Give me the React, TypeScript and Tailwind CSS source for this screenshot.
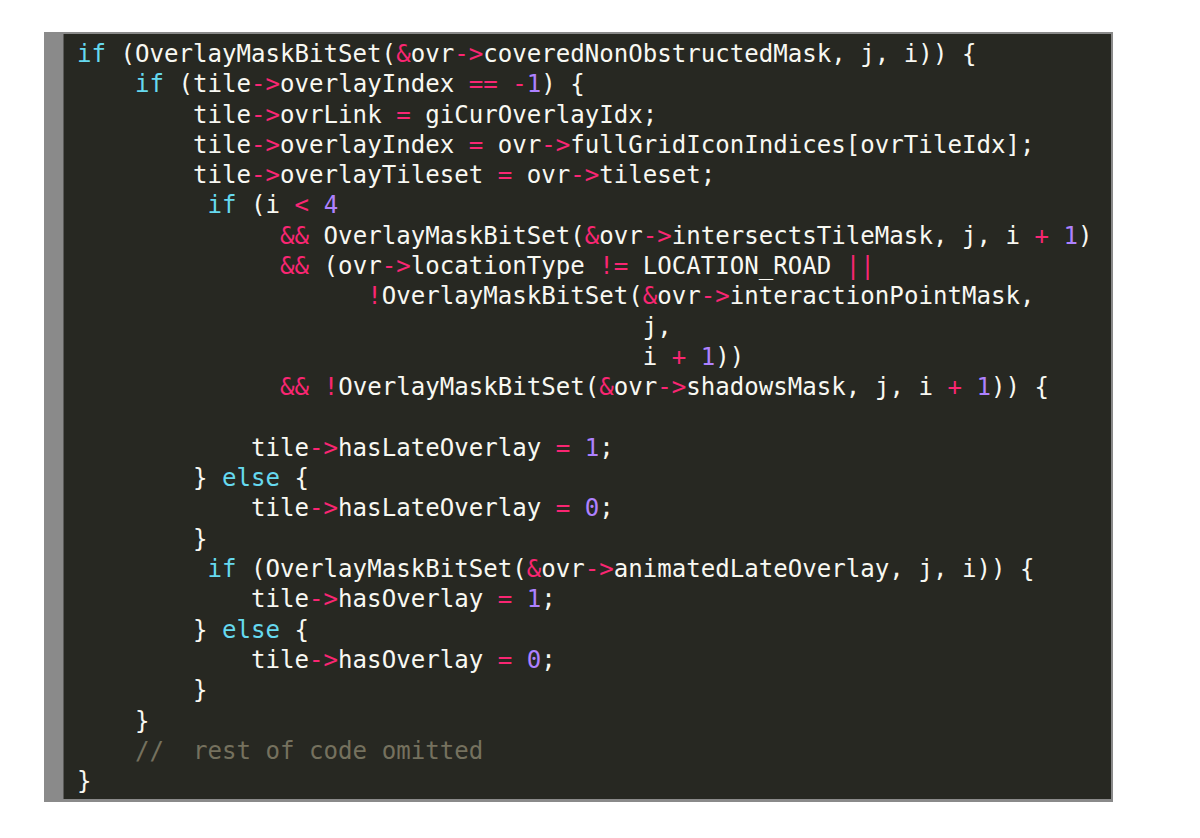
import React from "react";

const lines: string[] = [
  "if (OverlayMaskBitSet(&ovr->coveredNonObstructedMask, j, i)) {",
  "    if (tile->overlayIndex == -1) {",
  "        tile->ovrLink = giCurOverlayIdx;",
  "        tile->overlayIndex = ovr->fullGridIconIndices[ovrTileIdx];",
  "        tile->overlayTileset = ovr->tileset;",
  "         if (i < 4",
  "              && OverlayMaskBitSet(&ovr->intersectsTileMask, j, i + 1)",
  "              && (ovr->locationType != LOCATION_ROAD ||",
  "                    !OverlayMaskBitSet(&ovr->interactionPointMask,",
  "                                       j,",
  "                                       i + 1))",
  "              && !OverlayMaskBitSet(&ovr->shadowsMask, j, i + 1)) {",
  "",
  "            tile->hasLateOverlay = 1;",
  "        } else {",
  "            tile->hasLateOverlay = 0;",
  "        }",
  "         if (OverlayMaskBitSet(&ovr->animatedLateOverlay, j, i)) {",
  "            tile->hasOverlay = 1;",
  "        } else {",
  "            tile->hasOverlay = 0;",
  "        }",
  "    }",
  "    //  rest of code omitted",
  "}",
];

type Tok = { t: string; c: string };

const WHITE = "text-[#f8f8f2]";
const PINK = "text-[#f92672]";
const CYAN = "text-[#66d9ef]";
const PURPLE = "text-[#ae81ff]";
const COMMENT = "text-[#75715e]";

function tokenize(line: string): Tok[] {
  const out: Tok[] = [];
  const ci = line.indexOf("//");
  let code = line;
  let comment = "";
  if (ci >= 0) {
    code = line.slice(0, ci);
    comment = line.slice(ci);
  }
  const re = /(\bif\b|\belse\b)|(\d+)|(->|==|!=|&&|\|\||[=<+!&-])/g;
  let last = 0;
  let m: RegExpExecArray | null;
  while ((m = re.exec(code))) {
    if (m.index > last) out.push({ t: code.slice(last, m.index), c: WHITE });
    if (m[1]) out.push({ t: m[0], c: CYAN });
    else if (m[2]) out.push({ t: m[0], c: PURPLE });
    else out.push({ t: m[0], c: PINK });
    last = m.index + m[0].length;
  }
  if (last < code.length) out.push({ t: code.slice(last), c: WHITE });
  if (comment) out.push({ t: comment, c: COMMENT });
  return out;
}

export default function App() {
  return (
    <div className="min-h-[838px] w-[1200px] bg-white pt-[32px] pl-[44px]">
      <div className="w-[1069px] h-[770px] bg-[#8a8a8a] pl-[19px] pt-[2px] pr-[2px] pb-[3px]">
        <div className="w-full h-full bg-[#272822] border-l border-[#5a5a58] pl-[13px] pt-[5px]">
          <pre
            className="m-0 text-[24.1px] leading-[30.3px] whitespace-pre"
            style={{ fontFamily: '"DejaVu Sans Mono", "Liberation Mono", monospace' }}
          >
            {lines.map((l, i) => (
              <div key={i} className="h-[30.3px]">
                {l === "" ? " " : tokenize(l).map((tk, j) => (
                  <span key={j} className={tk.c}>
                    {tk.t}
                  </span>
                ))}
              </div>
            ))}
          </pre>
        </div>
      </div>
    </div>
  );
}
